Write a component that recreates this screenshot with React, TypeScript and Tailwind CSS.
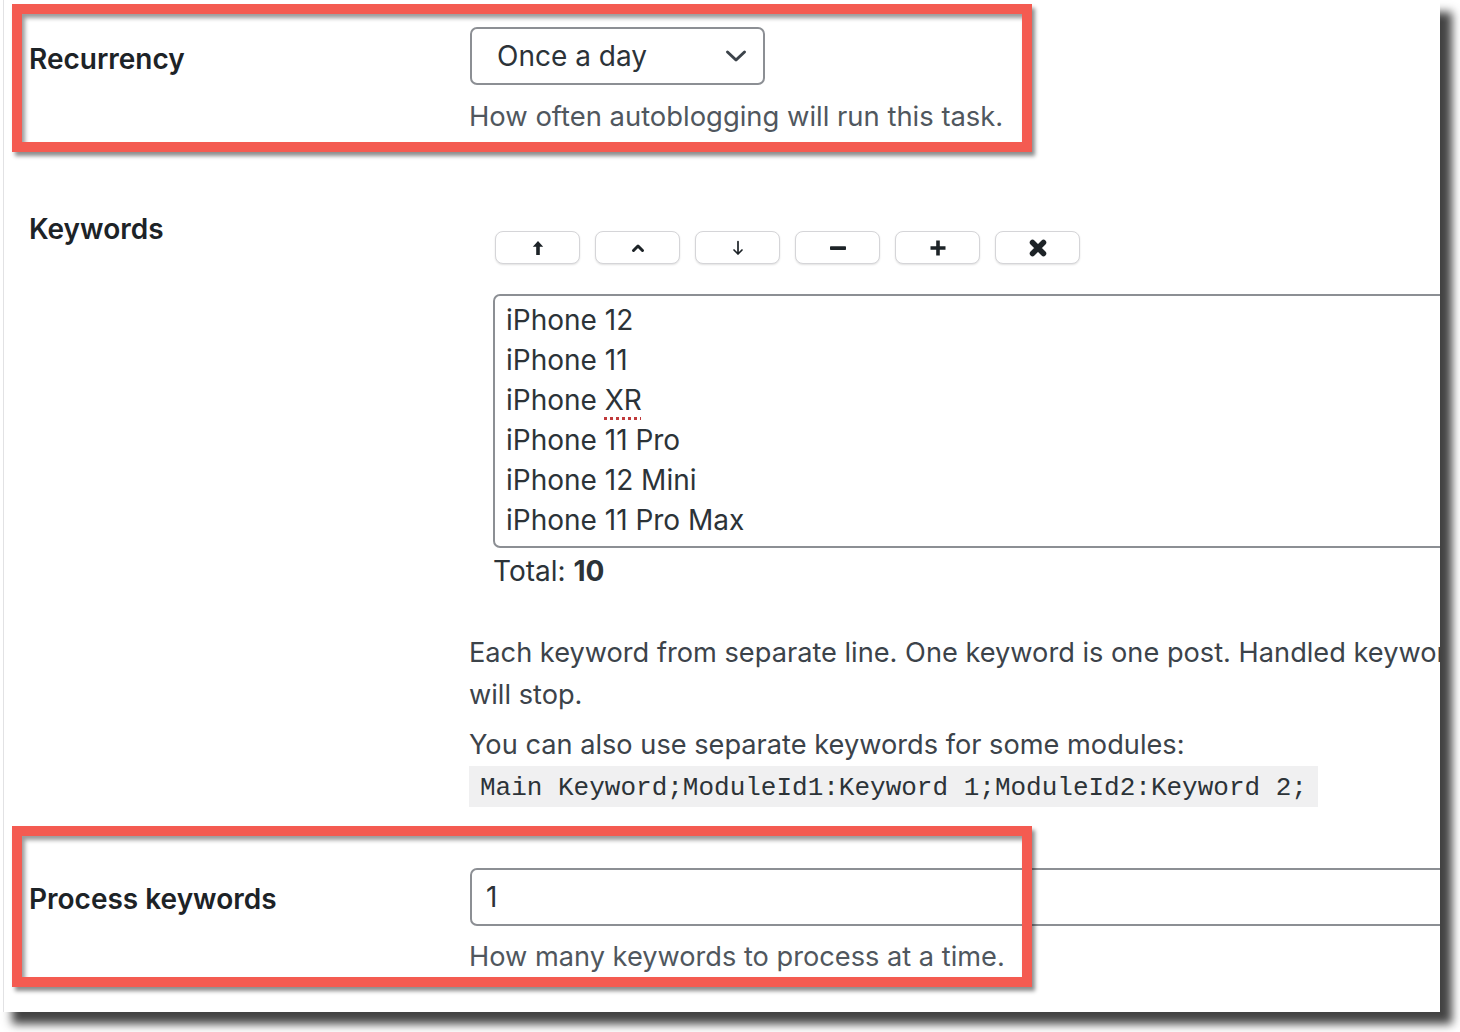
import React from "react";

const font = { fontFamily: "Inter, 'Noto Sans', 'Liberation Sans', sans-serif" };

function Btn({ children }: { children: React.ReactNode }) {
  return (
    <div className="w-[85px] h-[33px] bg-white border border-[#d5d5d8] rounded-[8px] shadow-[0_1px_2px_rgba(0,0,0,0.12)] flex items-center justify-center text-[#1d2327]">
      {children}
    </div>
  );
}

export default function App() {
  return (
    <div className="w-[1460px] h-[1032px] bg-white overflow-hidden" style={font}>
      <div className="relative w-[1440px] h-[1012px] bg-white shadow-[12px_12px_9px_rgba(0,0,0,0.74)] overflow-hidden">
        <div className="ml-[3px] h-full border-l border-[#e2e2e4] pl-[25px]">
          {/* Row 1 */}
          <div className="flex pt-[27px]">
            <div className="w-[440px] shrink-0 mt-[12px] text-[28px] leading-[40px] font-semibold text-[#1d2327]">
              Recurrency
            </div>
            <div className="flex-1 min-w-0">
              <div className="ml-[1px] w-[295px] h-[58px] border-2 border-[#8c8f94] rounded-[7px] flex items-center justify-between pl-[25px] pr-[16px] text-[28px] text-[#2c3338]">
                <span>Once a day</span>
                <svg width="22" height="14" viewBox="0 0 22 14" fill="none">
                  <path d="M2.5 3 L11 11 L19.5 3" stroke="#3c434a" strokeWidth="3" strokeLinecap="round" strokeLinejoin="round" />
                </svg>
              </div>
              <p className="mt-[13px] text-[27.4px] leading-[36px] text-[#50575e]">
                How often autoblogging will run this task.
              </p>
            </div>
          </div>

          {/* Row 2 */}
          <div className="flex mt-[75px]">
            <div className="w-[440px] shrink-0 text-[28px] leading-[40px] font-semibold text-[#1d2327]">
              Keywords
            </div>
            <div className="flex-1 min-w-0 pt-[22px]">
              <div className="ml-[26px] flex gap-[15px]">
                <Btn>
                  <svg width="12" height="16" viewBox="0 0 12 16">
                    <path d="M6 1 L11.2 6.8 L7.8 6.8 L7.8 15 L4.2 15 L4.2 6.8 L0.8 6.8 Z" fill="#1d2327" />
                  </svg>
                </Btn>
                <Btn>
                  <svg width="14" height="10" viewBox="0 0 14 10" fill="none">
                    <path d="M2.5 7.5 L7 3 L11.5 7.5" stroke="#1d2327" strokeWidth="3" strokeLinecap="round" strokeLinejoin="round" />
                  </svg>
                </Btn>
                <Btn>
                  <svg width="12" height="16" viewBox="0 0 12 16" fill="none">
                    <path d="M6 1.5 L6 14 M2 10 L6 14 L10 10" stroke="#1d2327" strokeWidth="1.7" strokeLinecap="round" strokeLinejoin="round" />
                  </svg>
                </Btn>
                <Btn>
                  <svg width="18" height="16" viewBox="0 0 18 16">
                    <rect x="1" y="6.2" width="16" height="3.8" rx="0.8" fill="#1d2327" />
                  </svg>
                </Btn>
                <Btn>
                  <svg width="18" height="18" viewBox="0 0 18 18">
                    <path d="M7.2 1.5 h3.6 v5.7 h5.7 v3.6 h-5.7 v5.7 h-3.6 v-5.7 h-5.7 v-3.6 h5.7 Z" fill="#1d2327" />
                  </svg>
                </Btn>
                <Btn>
                  <svg width="20" height="20" viewBox="0 0 20 20" fill="none">
                    <path d="M4.5 4.5 L15.5 15.5 M15.5 4.5 L4.5 15.5" stroke="#1d2327" strokeWidth="5.5" strokeLinecap="round" />
                  </svg>
                </Btn>
              </div>

              <div className="mt-[30px] ml-[24px] w-[1100px] h-[254px] border-2 border-[#8c8f94] rounded-[7px] pt-[4px] pl-[11px] text-[28px] leading-[40px] text-[#2c3338]">
                <div>iPhone 12</div>
                <div>iPhone 11</div>
                <div>
                  iPhone{" "}
                  <span className="underline decoration-dotted decoration-[#c0393b] decoration-[3px] underline-offset-[7px]">XR</span>
                </div>
                <div>iPhone 11 Pro</div>
                <div>iPhone 12 Mini</div>
                <div>iPhone 11 Pro Max</div>
              </div>

              <div className="ml-[24px] mt-[3px] text-[28px] leading-[40px] text-[#2c3338]">
                Total: <span className="font-bold">10</span>
              </div>

              <p className="mt-[41px] text-[27.2px] leading-[42px] text-[#3c434a] whitespace-nowrap">
                Each keyword from separate line. One keyword is one post. Handled keywords will be removed from the list and the task
                <br />
                will stop.
              </p>
              <p className="mt-[8px] text-[27.2px] leading-[42px] text-[#3c434a]">
                You can also use separate keywords for some modules:
              </p>
              <div className="inline-block h-[41px] px-[11px] bg-[#f0f0f1] text-[26px] leading-[44px] text-[#2c3338]" style={{ fontFamily: "'Liberation Mono', 'DejaVu Sans Mono', monospace" }}>
                Main Keyword;ModuleId1:Keyword 1;ModuleId2:Keyword 2;
              </div>
            </div>
          </div>

          {/* Row 3 */}
          <div className="flex mt-[61px]">
            <div className="w-[440px] shrink-0 mt-[11px] text-[28px] leading-[40px] font-semibold text-[#1d2327]">
              Process keywords
            </div>
            <div className="flex-1 min-w-0">
              <div className="ml-[1px] w-[1100px] h-[58px] border-2 border-[#8c8f94] rounded-[7px] flex items-center pl-[14px] text-[28px] text-[#2c3338]">
                1
              </div>
              <p className="mt-[13px] text-[27.2px] leading-[36px] text-[#50575e]">
                How many keywords to process at a time.
              </p>
            </div>
          </div>
        </div>

        {/* Annotation boxes */}
        <div className="absolute left-[12px] top-[4px] w-[1020px] h-[148px] border-[10px] border-[#f45b51] shadow-[3px_4px_4px_rgba(0,0,0,0.45),inset_3px_4px_4px_rgba(0,0,0,0.4)]" />
        <div className="absolute left-[12px] top-[826px] w-[1020px] h-[161px] border-[10px] border-[#f45b51] shadow-[3px_4px_4px_rgba(0,0,0,0.45),inset_3px_4px_4px_rgba(0,0,0,0.4)]" />
      </div>
    </div>
  );
}
